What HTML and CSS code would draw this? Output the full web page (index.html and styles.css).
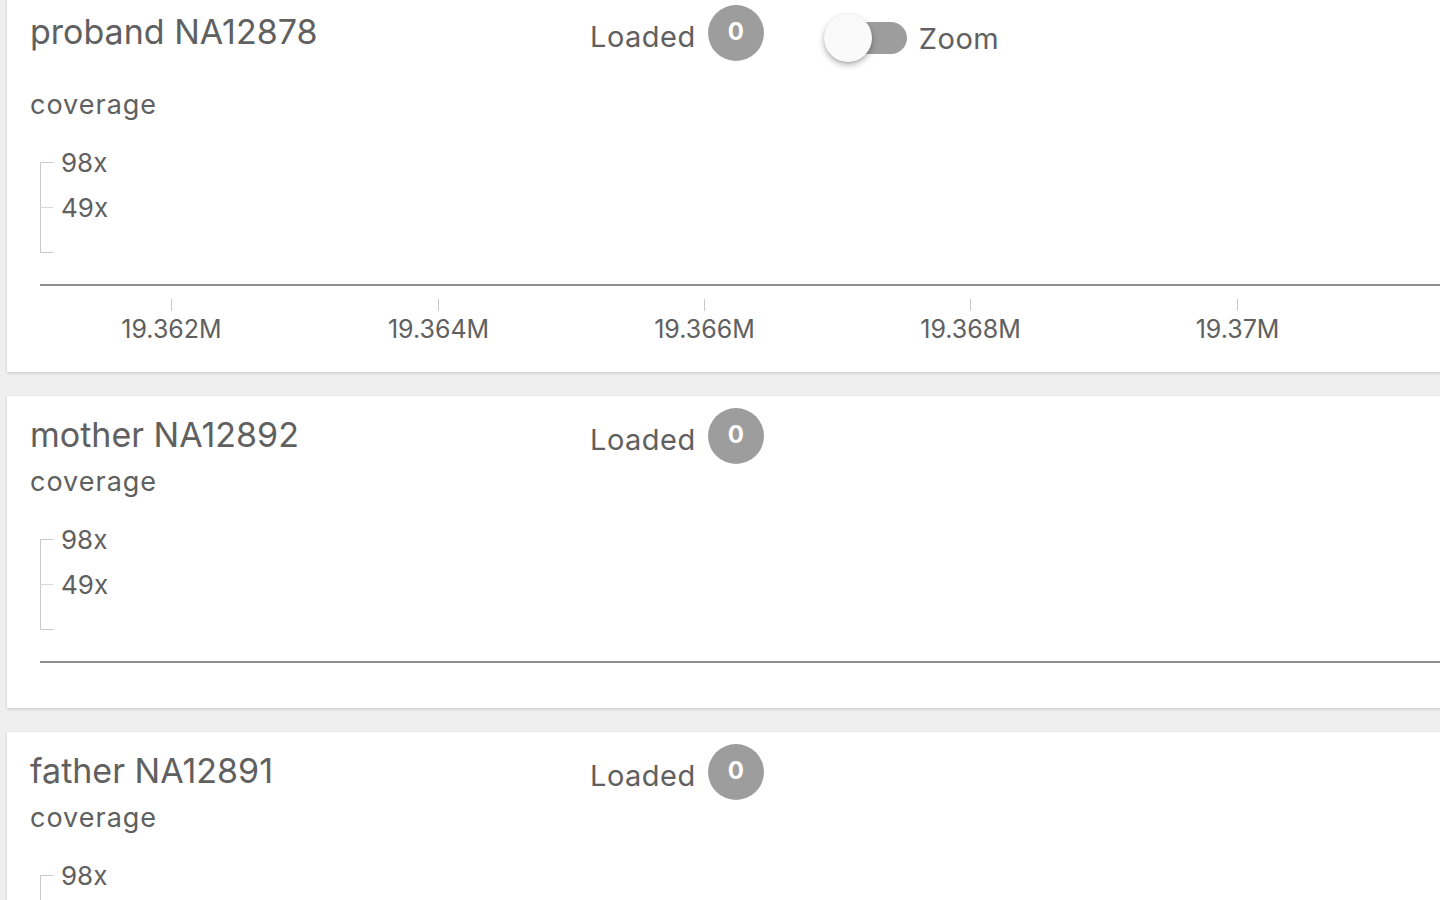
FILE: index.html
```html
<!DOCTYPE html>
<html lang="en">
<head>
<meta charset="utf-8">
<title>Coverage</title>
<link rel="stylesheet" href="styles.css">
</head>
<body>
<main class="tracks">
  <section class="card card--first">
    <div class="header header--tall">
      <h2 class="sample-title">proband NA12878</h2>
      <span class="loaded-label">Loaded</span>
      <span class="badge">0</span>
      <div class="zoom-toggle">
        <span class="switch"><span class="switch-track"></span><span class="switch-thumb"></span></span>
        <span class="zoom-label">Zoom</span>
      </div>
    </div>
    <div class="track-label">coverage</div>
    <svg class="chart chart--ticks" width="1480" height="249" viewBox="0 0 1480 249">
      <g class="y-axis">
        <path class="y-domain" d="M46.5,39.5H33.5V129.5H46.5"/>
        <line class="y-tick" x1="33" y1="84.5" x2="46" y2="84.5"/>
        <text class="y-text" x="54" y="48.5">98x</text>
        <text class="y-text" x="54" y="93.5">49x</text>
      </g>
      <line class="x-domain" x1="33" y1="162" x2="1480" y2="162"/>
      <g class="x-axis">
        <line class="x-tick" x1="164.5" y1="176" x2="164.5" y2="188"/>
        <line class="x-tick" x1="431.5" y1="176" x2="431.5" y2="188"/>
        <line class="x-tick" x1="697.5" y1="176" x2="697.5" y2="188"/>
        <line class="x-tick" x1="963.5" y1="176" x2="963.5" y2="188"/>
        <line class="x-tick" x1="1230.5" y1="176" x2="1230.5" y2="188"/>
        <text class="x-text" x="164.5" y="215">19.362M</text>
        <text class="x-text" x="431.5" y="215">19.364M</text>
        <text class="x-text" x="697.5" y="215">19.366M</text>
        <text class="x-text" x="963.5" y="215">19.368M</text>
        <text class="x-text" x="1230.5" y="215">19.37M</text>
      </g>
    </svg>
  </section>

  <section class="card">
    <div class="header">
      <h2 class="sample-title">mother NA12892</h2>
      <span class="loaded-label">Loaded</span>
      <span class="badge">0</span>
    </div>
    <div class="track-label">coverage</div>
    <svg class="chart" width="1480" height="208" viewBox="0 0 1480 208">
      <g class="y-axis">
        <path class="y-domain" d="M46.5,39.5H33.5V129.5H46.5"/>
        <line class="y-tick" x1="33" y1="84.5" x2="46" y2="84.5"/>
        <text class="y-text" x="54" y="48.5">98x</text>
        <text class="y-text" x="54" y="93.5">49x</text>
      </g>
      <line class="x-domain" x1="33" y1="162" x2="1480" y2="162"/>
    </svg>
  </section>

  <section class="card">
    <div class="header">
      <h2 class="sample-title">father NA12891</h2>
      <span class="loaded-label">Loaded</span>
      <span class="badge">0</span>
    </div>
    <div class="track-label">coverage</div>
    <svg class="chart" width="1480" height="208" viewBox="0 0 1480 208">
      <g class="y-axis">
        <path class="y-domain" d="M46.5,39.5H33.5V129.5H46.5"/>
        <line class="y-tick" x1="33" y1="84.5" x2="46" y2="84.5"/>
        <text class="y-text" x="54" y="48.5">98x</text>
        <text class="y-text" x="54" y="93.5">49x</text>
      </g>
      <line class="x-domain" x1="33" y1="162" x2="1480" y2="162"/>
    </svg>
  </section>
</main>
</body>
</html>
```

FILE: styles.css
```css
html, body {
  margin: 0;
  padding: 0;
  overflow: hidden;
  background: #efefef;
  height: 100%;
}

body {
  font-family: Inter, "Noto Sans", sans-serif;
  color: #606060;
}

.tracks {
  padding-left: 7px;
  display: flex;
  flex-direction: column;
  gap: 24px;
  width: 1480px;
}

.card {
  background: #fff;
  padding-top: 12px;
  box-shadow: 0 1px 3px rgba(0, 0, 0, 0.18);
  display: flex;
  flex-direction: column;
}

.card--first {
  padding-top: 5px;
}

.header {
  display: flex;
  align-items: center;
  height: 56px;
  padding-left: 23px;
}

.header--tall {
  margin-bottom: 26px;
}

.sample-title {
  flex: 0 0 560px;
  margin: 0;
  font-size: 34px;
  font-weight: 400;
  line-height: 40px;
  margin-top: -3px;
  color: #606060;
}

.loaded-label {
  font-size: 29px;
  line-height: 36px;
  letter-spacing: 0.5px;
  margin-right: 12px;
  margin-top: 8px;
}

.badge {
  width: 56px;
  height: 56px;
  border-radius: 50%;
  background: #9d9d9d;
  color: #fff;
  font-weight: 700;
  font-size: 24px;
  display: flex;
  align-items: center;
  justify-content: center;
  line-height: 1;
  padding-bottom: 2px;
  box-sizing: border-box;
}

.zoom-toggle {
  display: flex;
  align-items: center;
  margin-left: 60px;
  margin-top: 10px;
  gap: 12px;
}

.switch {
  position: relative;
  width: 83px;
  height: 48px;
  display: block;
}

.switch-track {
  position: absolute;
  left: 14px;
  top: 8px;
  width: 69px;
  height: 32px;
  border-radius: 16px;
  background: #9d9d9d;
}

.switch-thumb {
  position: absolute;
  left: 0;
  top: 0;
  width: 48px;
  height: 48px;
  border-radius: 50%;
  background: #fafafa;
  box-shadow: 0 3px 6px rgba(0, 0, 0, 0.28), 0 1px 2px rgba(0, 0, 0, 0.12);
}

.zoom-label {
  font-size: 29px;
  line-height: 36px;
  letter-spacing: 0.5px;
  margin-top: 2px;
}

.track-label {
  padding-left: 23px;
  font-size: 27px;
  line-height: 36px;
  letter-spacing: 1px;
}

.chart {
  display: block;
  font-family: Inter, "Noto Sans", sans-serif;
}

.y-domain {
  fill: none;
  stroke: #c8c8c8;
  stroke-width: 1;
}

.y-tick {
  stroke: #d8d8d8;
  stroke-width: 1;
}

.y-text {
  fill: #606060;
  font-size: 26px;
}

.x-domain {
  stroke: #8e8e8e;
  stroke-width: 2;
}

.x-tick {
  stroke: #c8c8c8;
  stroke-width: 1;
}

.x-text {
  fill: #606060;
  font-size: 25px;
  text-anchor: middle;
}
```
